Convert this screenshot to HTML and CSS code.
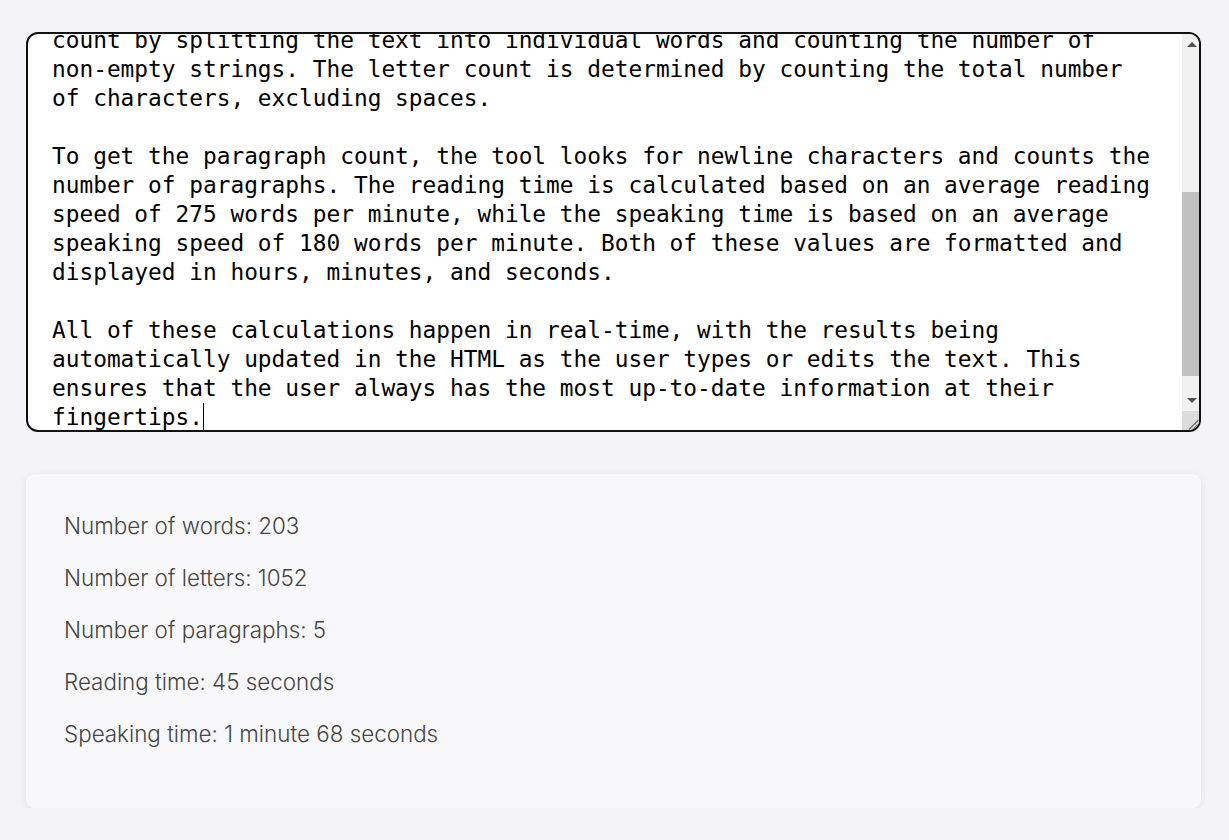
FILE: index.html
```html
<!DOCTYPE html>
<html lang="en">
<head>
<meta charset="utf-8">
<title>Word Counter</title>
<link rel="stylesheet" href="styles.css">
</head>
<body>
<main class="page">
<div class="editor-box">
<div class="editor" id="editor">This word counter is a simple tool that analyzes any text you type or paste into the box above. It shows the number of words, letters and paragraphs, along with an estimate of how long the text takes to read and to speak aloud.

The page is built with plain HTML, CSS and JavaScript. An event listener watches the text area and runs a small function every time its content changes, so the numbers below always stay in sync with what you write.

Behind the scenes, the JavaScript code processes the text in several steps. The first thing the script does whenever the input changes is to calculate the word count by splitting the text into individual words and counting the number of non-empty strings. The letter count is determined by counting the total number of characters, excluding spaces.

To get the paragraph count, the tool looks for newline characters and counts the number of paragraphs. The reading time is calculated based on an average reading speed of 275 words per minute, while the speaking time is based on an average speaking speed of 180 words per minute. Both of these values are formatted and displayed in hours, minutes, and seconds.

All of these calculations happen in real-time, with the results being automatically updated in the HTML as the user types or edits the text. This ensures that the user always has the most up-to-date information at their fingertips.<span class="caret"></span></div>
<div class="scrollbar" aria-hidden="true">
<div class="sb-btn"><span class="arrow-up"></span></div>
<div class="sb-track"><div class="sb-thumb" style="margin-top:141px;height:184px"></div></div>
<div class="sb-btn"><span class="arrow-down"></span></div>
<div class="sb-corner">
<svg width="17" height="19" viewBox="0 0 17 19"><path d="M7 18.5 L16.5 9" stroke="#6b6b6b" stroke-width="1.3" fill="none"/><path d="M11 18.5 L16.5 13" stroke="#6b6b6b" stroke-width="1.3" fill="none"/></svg>
</div>
</div>
</div>

<section class="stats">
<p class="stat">Number of words: 203</p>
<p class="stat">Number of letters: 1052</p>
<p class="stat">Number of paragraphs: 5</p>
<p class="stat">Reading time: 45 seconds</p>
<p class="stat">Speaking time: 1 minute 68 seconds</p>
</section>
</main>
<script src="script.js"></script>
</body>
</html>
```

FILE: styles.css
```css
html, body {
  margin: 0;
  padding: 0;
  background: #f4f4f6;
}

.page {
  padding: 32px 28px 0 26px;
  display: flex;
  flex-direction: column;
  gap: 42px;
}

.editor-box {
  box-sizing: border-box;
  height: 400px;
  display: flex;
  border: 2px solid #111;
  border-radius: 12px;
  background: #fff;
  overflow: hidden;
}

.editor {
  flex: 1;
  min-width: 0;
  padding: 24px;
  color: #000;
  font-family: "DejaVu Sans Mono", monospace;
  font-size: 22.8px;
  line-height: 29px;
  white-space: pre-wrap;
  overflow-y: scroll;
  scrollbar-width: none;
}
.editor::-webkit-scrollbar {
  display: none;
}

.scrollbar {
  width: 17px;
  flex: none;
  display: flex;
  flex-direction: column;
  background: #f1f1f1;
}
.sb-btn {
  height: 17px;
  flex: none;
  display: flex;
  align-items: center;
  justify-content: center;
}
.arrow-up {
  width: 0;
  height: 0;
  border-left: 5px solid transparent;
  border-right: 5px solid transparent;
  border-bottom: 5px solid #505050;
  margin: 3px 0 0 2px;
}
.arrow-down {
  width: 0;
  height: 0;
  border-left: 5px solid transparent;
  border-right: 5px solid transparent;
  border-top: 5px solid #505050;
  margin: 0 0 4px 2px;
}
.sb-track {
  flex: 1;
}
.sb-thumb {
  background: #c1c1c1;
}
.sb-corner {
  height: 19px;
  flex: none;
  background: #dcdcdc;
}
.sb-corner svg {
  display: block;
}

.caret {
  display: inline-block;
  width: 0;
  height: 29px;
  border-left: 1.5px solid #000;
  vertical-align: -7px;
}

.stats {
  background: #f8f8fa;
  border-radius: 8px;
  box-shadow: 0 2px 10px rgba(0, 0, 0, 0.07), 0 0 1px rgba(0, 0, 0, 0.06);
  padding: 36px 38px 38px;
  font-family: Inter, "Noto Sans", sans-serif;
  font-weight: 300;
  font-size: 22.4px;
  color: #454545;
}

.stat {
  margin: 0 0 20px;
  line-height: 32px;
}
```

FILE: script.js
```js
document.getElementById('editor').scrollTop = 322;
```
